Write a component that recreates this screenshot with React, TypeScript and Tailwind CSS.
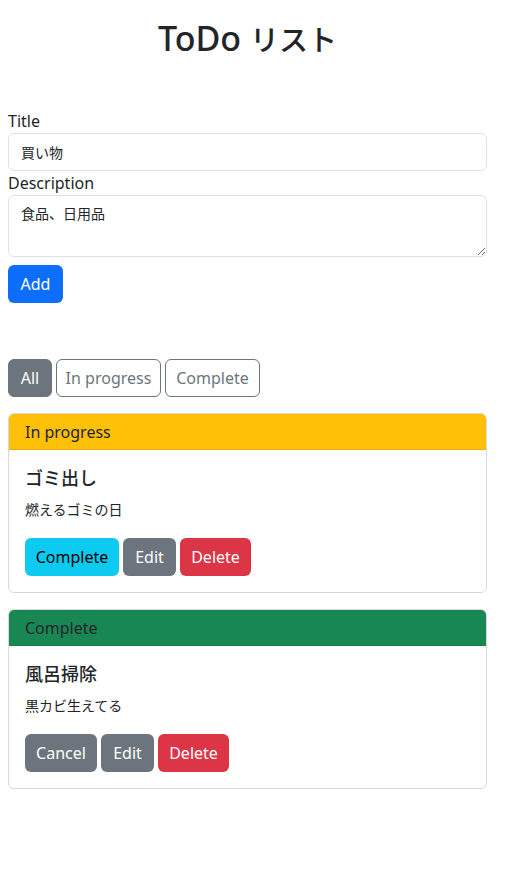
import { useState } from "react";

type Todo = {
  id: number;
  title: string;
  description: string;
  done: boolean;
};

const FONT = "font-['Noto_Sans','Noto_Sans_CJK_JP',sans-serif]";

const initialTodos: Todo[] = [
  { id: 1, title: "ゴミ出し", description: "燃えるゴミの日", done: false },
  { id: 2, title: "風呂掃除", description: "黒カビ生えてる", done: true },
];

function TodoCard({ todo }: { todo: Todo }) {
  return (
    <div className="mb-4 rounded-md border border-[#d9d9d9] overflow-hidden">
      {todo.done ? (
        <div className="h-[36px] flex items-center px-4 bg-[#198754] border-b border-[#167a4c] text-[#212529]">
          Complete
        </div>
      ) : (
        <div className="h-[36px] flex items-center px-4 bg-[#ffc107] border-b border-[#e6ad06] text-[#212529]">
          In progress
        </div>
      )}
      <div className="p-4">
        <h5 className="text-[18px] font-medium leading-6 mb-2">{todo.title}</h5>
        <p className="text-[14px] leading-6 mb-4">{todo.description}</p>
        <div className="flex gap-1">
          {todo.done ? (
            <button className="h-[38px] w-[72px] rounded-md bg-[#6c757d] text-white">Cancel</button>
          ) : (
            <button className="h-[38px] w-[94px] rounded-md bg-[#0dcaf0] text-black">Complete</button>
          )}
          <button className="h-[38px] w-[53px] rounded-md bg-[#6c757d] text-white">Edit</button>
          <button className="h-[38px] w-[71px] rounded-md bg-[#dc3545] text-white">Delete</button>
        </div>
      </div>
    </div>
  );
}

export default function App() {
  const [title, setTitle] = useState("買い物");
  const [description, setDescription] = useState("食品、日用品");
  const [filter, setFilter] = useState("all");

  return (
    <div className={`w-[495px] px-2 text-base text-[#212529] bg-white ${FONT}`}>
      <h1 className="pt-[17px] mb-[48px] text-center font-medium leading-[42px] text-[34px]">
        ToDo <span className="text-[29px]">リスト</span>
      </h1>

      <label className="block leading-6">Title</label>
      <input
        value={title}
        onChange={(e) => setTitle(e.target.value)}
        className="block w-full h-[38px] px-3 text-[14px] rounded-md border border-[#dee2e6] outline-none"
      />
      <label className="block leading-6">Description</label>
      <textarea
        value={description}
        onChange={(e) => setDescription(e.target.value)}
        className="block w-full h-[62px] px-3 py-[6px] text-[14px] leading-6 rounded-md border border-[#dee2e6] outline-none"
      />
      <button className="mt-2 h-[38px] w-[55px] rounded-md bg-[#0d6efd] text-white">Add</button>

      <div className="mt-[56px] mb-4 flex gap-1">
        <button
          onClick={() => setFilter("all")}
          className={`h-[38px] w-[44px] rounded-md border border-[#6c757d] ${filter === "all" ? "bg-[#6c757d] text-white" : "text-[#6c757d]"}`}
        >
          All
        </button>
        <button
          onClick={() => setFilter("progress")}
          className={`h-[38px] w-[105px] rounded-md border border-[#6c757d] ${filter === "progress" ? "bg-[#6c757d] text-white" : "text-[#6c757d]"}`}
        >
          In progress
        </button>
        <button
          onClick={() => setFilter("complete")}
          className={`h-[38px] w-[95px] rounded-md border border-[#6c757d] ${filter === "complete" ? "bg-[#6c757d] text-white" : "text-[#6c757d]"}`}
        >
          Complete
        </button>
      </div>

      {initialTodos.map((t) => (
        <TodoCard key={t.id} todo={t} />
      ))}
    </div>
  );
}
